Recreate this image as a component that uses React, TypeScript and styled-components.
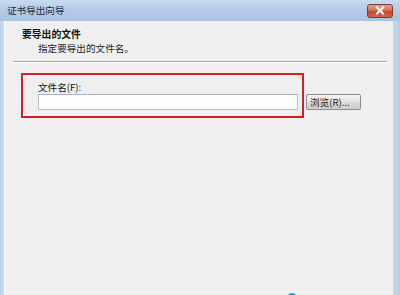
import React from "react";
import styled, { createGlobalStyle } from "styled-components";

const Global = createGlobalStyle`
  html, body { margin: 0; padding: 0; width: 400px; height: 295px; overflow: hidden; background: #c3d6eb; }
  * { box-sizing: border-box; }
`;

const Frame = styled.div`
  width: 400px;
  height: 295px;
  display: flex;
  flex-direction: column;
  background: linear-gradient(to right, #bcd2ea 0px, #c8daee 4px, #c8daee 392px, #b7cde6 400px);
  font-family: "Noto Sans CJK SC", "Noto Sans", sans-serif;
  color: #1a1a1a;
`;

const TitleBar = styled.div`
  height: 21px;
  flex: none;
  display: flex;
  align-items: center;
  justify-content: space-between;
  padding: 0 7px 1px 7px;
  background: linear-gradient(to bottom, #c7dbf0 0%, #b3cbe6 50%, #a9c4e2 100%);
`;

const Title = styled.span`
  font-size: 9.6px;
  color: #1e2a3a;
`;

const CloseButton = styled.div`
  width: 26px;
  height: 14px;
  border: 1px solid #7a3a34;
  border-radius: 3px;
  background: linear-gradient(to bottom, #e9a290 0%, #d66a52 45%, #c2412a 55%, #d26a4e 100%);
  display: flex;
  align-items: center;
  justify-content: center;
  margin-top: 1px;
`;

const Body = styled.div`
  flex: 1;
  display: flex;
  margin: 0 7px 0 4px;
  border-left: 2px solid #f4f8fc;
  background: #efefef;
`;

const Panel = styled.div`
  flex: 1;
  display: flex;
  flex-direction: column;
`;

const Header = styled.div`
  padding: 6px 0 0 16px;
  height: 40px;
`;

const HeaderTitle = styled.div`
  font-size: 9.8px;
  font-weight: bold;
  line-height: 14px;
  color: #111;
`;

const HeaderSub = styled.div`
  font-size: 9.6px;
  line-height: 14px;
  padding-left: 16px;
  color: #222;
`;

const Separator = styled.div`
  height: 2px;
  margin: 0 6px 0 7px;
  border-top: 1px solid #a0a0a0;
  border-bottom: 1px solid #ffffff;
`;

const Highlight = styled.div`
  margin: 10px 0 0 15px;
  width: 283px;
  height: 45px;
  border: 2px solid #d61e23;
  padding: 6px 0 0 15px;
`;

const Label = styled.div`
  font-size: 9.6px;
  line-height: 12px;
  color: #111;
  margin-bottom: 1px;
`;

const Row = styled.div`
  display: flex;
  align-items: center;
  gap: 8px;
`;

const Input = styled.div`
  width: 260px;
  height: 16px;
  flex: none;
  background: #fbfdff;
  border: 1px solid #b5bec8;
  border-top-color: #aab3bd;
`;

const Button = styled.div`
  width: 55px;
  height: 16px;
  flex: none;
  border: 1px solid #8c8c8c;
  border-radius: 2px;
  background: linear-gradient(to bottom, #f4f4f4 0%, #e6e6e6 50%, #d9d9d9 51%, #cfcfcf 100%);
  font-size: 9.6px;
  line-height: 14px;
  color: #222;
  padding-left: 3px;
  white-space: nowrap;
`;

const BottomLine = styled.div`
  margin-top: auto;
  height: 3px;
  border-top: 1px solid #f8f8f8;
  position: relative;
`;

const Blob = styled.div`
  position: absolute;
  left: 281px;
  top: 0px;
  width: 10px;
  height: 8px;
  border-radius: 50%;
  background: #2ea3d3;
`;

export default function App() {
  return (
    <>
      <Global />
      <Frame>
        <TitleBar>
          <Title>证书导出向导</Title>
          <CloseButton>
            <svg width="10" height="9" viewBox="0 0 10 9">
              <path d="M2 1.5 L8 7.5 M8 1.5 L2 7.5" stroke="#ffffff" strokeWidth="2.2" strokeLinecap="square" />
            </svg>
          </CloseButton>
        </TitleBar>
        <Body>
          <Panel>
            <Header>
              <HeaderTitle>要导出的文件</HeaderTitle>
              <HeaderSub>指定要导出的文件名。</HeaderSub>
            </Header>
            <Separator />
            <Highlight>
              <Label>文件名(F):</Label>
              <Row>
                <Input />
                <Button>浏览(R)...</Button>
              </Row>
            </Highlight>
            <BottomLine>
              <Blob />
            </BottomLine>
          </Panel>
        </Body>
      </Frame>
    </>
  );
}
